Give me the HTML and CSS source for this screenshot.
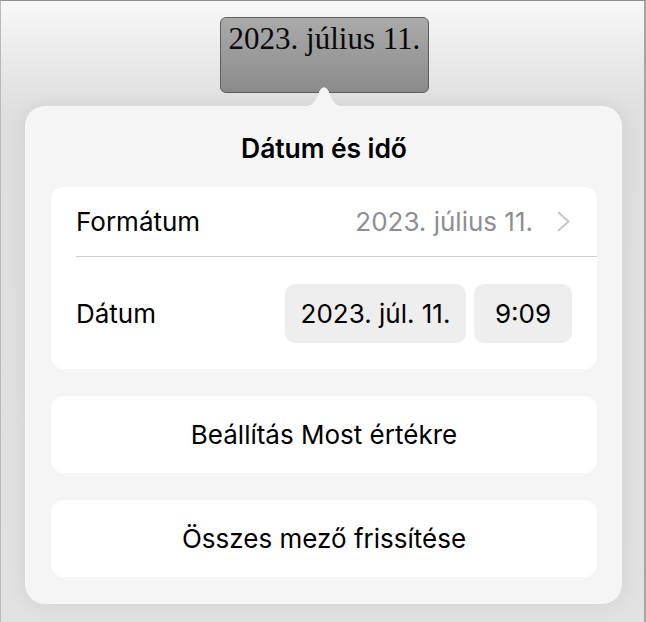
FILE: index.html
```html
<!DOCTYPE html>
<html lang="hu">
<head>
<meta charset="utf-8">
<title>Dátum és idő</title>
<link rel="stylesheet" href="styles.css">
</head>
<body>
<div class="screen">
  <div class="top">
    <div class="tag">2023. július 11.</div>
  </div>
  <div class="popover">
    <svg class="arrow" width="48" height="22" viewBox="0 0 48 22" aria-hidden="true">
      <path d="M0 22 C 11 22, 15 19, 19.5 6 Q 24 -1.5 28.5 6 C 33 19, 37 22, 48 22 Z" fill="#f5f5f5"/>
    </svg>
    <h1 class="title">Dátum és idő</h1>
    <div class="card">
      <div class="row row-format">
        <span class="label">Formátum</span>
        <span class="value">2023. július 11.</span>
        <svg class="chevron" width="13" height="21" viewBox="0 0 13 21" aria-hidden="true">
          <polyline points="1.5,1.5 11.5,10.5 1.5,19.5" fill="none" stroke="#c4c4c7" stroke-width="1.8" stroke-linecap="round" stroke-linejoin="round"/>
        </svg>
      </div>
      <div class="sep"></div>
      <div class="row row-date">
        <span class="label">Dátum</span>
        <div class="pills">
          <span class="pill pill-date">2023. júl. 11.</span>
          <span class="pill pill-time">9:09</span>
        </div>
      </div>
    </div>
    <button class="btn">Beállítás Most értékre</button>
    <button class="btn">Összes mező frissítése</button>
  </div>
</div>
</body>
</html>
```

FILE: styles.css
```css
* {
  box-sizing: border-box;
}

html, body {
  margin: 0;
  padding: 0;
}

body {
  font-family: Inter, "Noto Sans", "Liberation Sans", sans-serif;
  color: #000;
}

.screen {
  width: 646px;
  height: 622px;
  overflow: hidden;
  border-top: 1px solid #8f8f8f;
  border-left: 1px solid #b9b9b9;
  border-right: 2px solid #a5a5a5;
  background: linear-gradient(#f8f8f8 0px, #e9e9e9 60px, #dfdfdf 110px, #e1e1e1 100%);
}

.top {
  display: flex;
  padding-top: 16px;
  padding-left: 219px;
}

.tag {
  width: 209px;
  height: 76px;
  border: 1px solid #5e5e5e;
  border-radius: 6px;
  background: linear-gradient(#aaaaaa, #8b8b8b);
  font-family: "Liberation Serif", "DejaVu Serif", serif;
  font-size: 31px;
  line-height: 34px;
  padding-top: 4px;
  text-align: center;
  color: #0a0a0a;
  white-space: nowrap;
}

.popover {
  position: relative;
  width: 597px;
  margin-top: 13px;
  margin-left: 24px;
  padding: 0 25px 27px 26px;
  background: #f5f5f5;
  border-radius: 20px;
  box-shadow: 0 0 22px rgba(0, 0, 0, 0.07);
  display: flex;
  flex-direction: column;
}

.arrow {
  position: absolute;
  top: -21px;
  left: 275px;
  display: block;
}

.title {
  margin: 0;
  height: 81px;
  display: flex;
  align-items: center;
  justify-content: center;
  font-size: 26.5px;
  font-weight: 600;
  letter-spacing: -0.1px;
  padding-top: 2px;
}

.card {
  background: #fff;
  border-radius: 13px;
  display: flex;
  flex-direction: column;
}

.row {
  display: flex;
  align-items: center;
  padding: 0 25px;
  font-size: 26px;
}

.row-format {
  height: 69px;
  padding-right: 27px;
}

.row-date {
  height: 112px;
  padding-right: 25px;
}

.label {
  flex: 1;
}

.value {
  color: #8e8e93;
  margin-right: 24px;
}

.chevron {
  display: block;
}

.sep {
  height: 1px;
  background: #cfcfd2;
  margin-left: 25px;
}

.pills {
  display: flex;
  gap: 8px;
}

.pill {
  height: 59px;
  display: flex;
  align-items: center;
  justify-content: center;
  background: #eeeeef;
  border-radius: 10px;
}

.pill-date {
  width: 181px;
}

.pill-time {
  width: 98px;
}

.btn {
  margin-top: 27px;
  height: 77px;
  border: none;
  border-radius: 13px;
  background: #fff;
  font-family: inherit;
  font-size: 26px;
  color: #000;
  padding: 0;
}
```
